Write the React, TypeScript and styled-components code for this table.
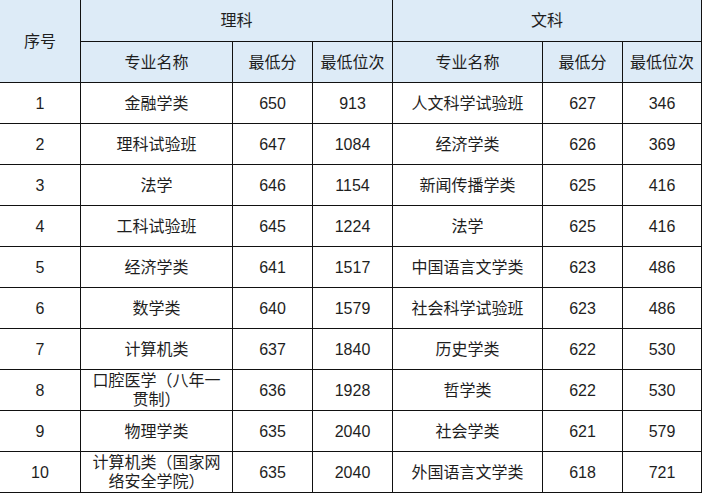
import React from 'react'
import styled, { createGlobalStyle } from 'styled-components'

const GlobalStyle = createGlobalStyle`
  html, body {
    margin: 0;
    padding: 0;
    background: #ffffff;
  }
  body {
    font-family: 'Liberation Sans', 'Noto Sans CJK SC', sans-serif;
    color: #1e1e1e;
  }
`

const Wrap = styled.div`
  width: 703px;
  height: 493px;
  overflow: hidden;
  background: #ffffff;
`

const Table = styled.table`
  border-collapse: separate;
  border-spacing: 0;
  table-layout: fixed;
  width: 702px;
`

const Cell = styled.td<{ $head?: boolean; $h?: number }>`
  box-sizing: border-box;
  height: ${(p) => p.$h ?? 41}px;
  padding: 0 4px;
  border-right: 1px solid #111;
  border-bottom: 1px solid #111;
  background: ${(p) => (p.$head ? '#ddebf7' : '#ffffff')};
  font-size: 16px;
  line-height: 19px;
  font-weight: 400;
  text-align: center;
  vertical-align: middle;
  word-break: break-all;
`

const widths = [81, 152, 80, 80, 150, 80, 79]

const rows: [string, string, string, string, string, string, string][] = [
  ['1', '金融学类', '650', '913', '人文科学试验班', '627', '346'],
  ['2', '理科试验班', '647', '1084', '经济学类', '626', '369'],
  ['3', '法学', '646', '1154', '新闻传播学类', '625', '416'],
  ['4', '工科试验班', '645', '1224', '法学', '625', '416'],
  ['5', '经济学类', '641', '1517', '中国语言文学类', '623', '486'],
  ['6', '数学类', '640', '1579', '社会科学试验班', '623', '486'],
  ['7', '计算机类', '637', '1840', '历史学类', '622', '530'],
  ['8', '口腔医学（八年一贯制）', '636', '1928', '哲学类', '622', '530'],
  ['9', '物理学类', '635', '2040', '社会学类', '621', '579'],
  ['10', '计算机类（国家网络安全学院）', '635', '2040', '外国语言文学类', '618', '721'],
]

const App = () => {
  return (
    <Wrap>
      <GlobalStyle />
      <Table>
        <colgroup>
          {widths.map((w, i) => (
            <col key={i} style={{ width: w }} />
          ))}
        </colgroup>
        <thead>
          <tr>
            <Cell as="th" $head $h={42} rowSpan={2}>
              序号
            </Cell>
            <Cell as="th" $head $h={42} colSpan={3}>
              理科
            </Cell>
            <Cell as="th" $head $h={42} colSpan={3}>
              文科
            </Cell>
          </tr>
          <tr>
            <Cell as="th" $head>专业名称</Cell>
            <Cell as="th" $head>最低分</Cell>
            <Cell as="th" $head>最低位次</Cell>
            <Cell as="th" $head>专业名称</Cell>
            <Cell as="th" $head>最低分</Cell>
            <Cell as="th" $head>最低位次</Cell>
          </tr>
        </thead>
        <tbody>
          {rows.map((r) => (
            <tr key={r[0]}>
              {r.map((c, i) => (
                <Cell key={i}>{c}</Cell>
              ))}
            </tr>
          ))}
        </tbody>
      </Table>
    </Wrap>
  )
}

export default App
